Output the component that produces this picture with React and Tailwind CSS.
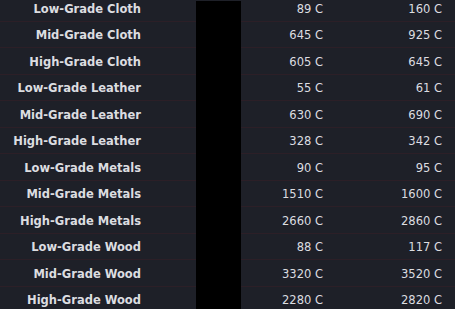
import React from "react";

const rows = [
  ["Low-Grade Cloth", "89 C", "160 C"],
  ["Mid-Grade Cloth", "645 C", "925 C"],
  ["High-Grade Cloth", "605 C", "645 C"],
  ["Low-Grade Leather", "55 C", "61 C"],
  ["Mid-Grade Leather", "630 C", "690 C"],
  ["High-Grade Leather", "328 C", "342 C"],
  ["Low-Grade Metals", "90 C", "95 C"],
  ["Mid-Grade Metals", "1510 C", "1600 C"],
  ["High-Grade Metals", "2660 C", "2860 C"],
  ["Low-Grade Wood", "88 C", "117 C"],
  ["Mid-Grade Wood", "3320 C", "3520 C"],
  ["High-Grade Wood", "2280 C", "2820 C"],
];

export default function App() {
  return (
    <div className="relative w-[455px] h-[309px] overflow-hidden bg-[#1e2028] text-[#dcdde0] font-['DejaVu_Sans',Verdana,sans-serif] text-[11.5px]">
      <div className="-mt-[5px]">
        {rows.map(([name, low, high]) => (
          <div
            key={name}
            className="flex items-center h-[26.5px] pt-[3px] border-b border-[#2c1f27]"
          >
            <div className="w-[141px] text-right font-bold">{name}</div>
            <div className="w-[182px] text-right">{low}</div>
            <div className="w-[119px] text-right">{high}</div>
          </div>
        ))}
      </div>
      {/* redacted column */}
      <div className="absolute left-[196px] top-[1px] w-[45px] bottom-0 bg-black" />
    </div>
  );
}
